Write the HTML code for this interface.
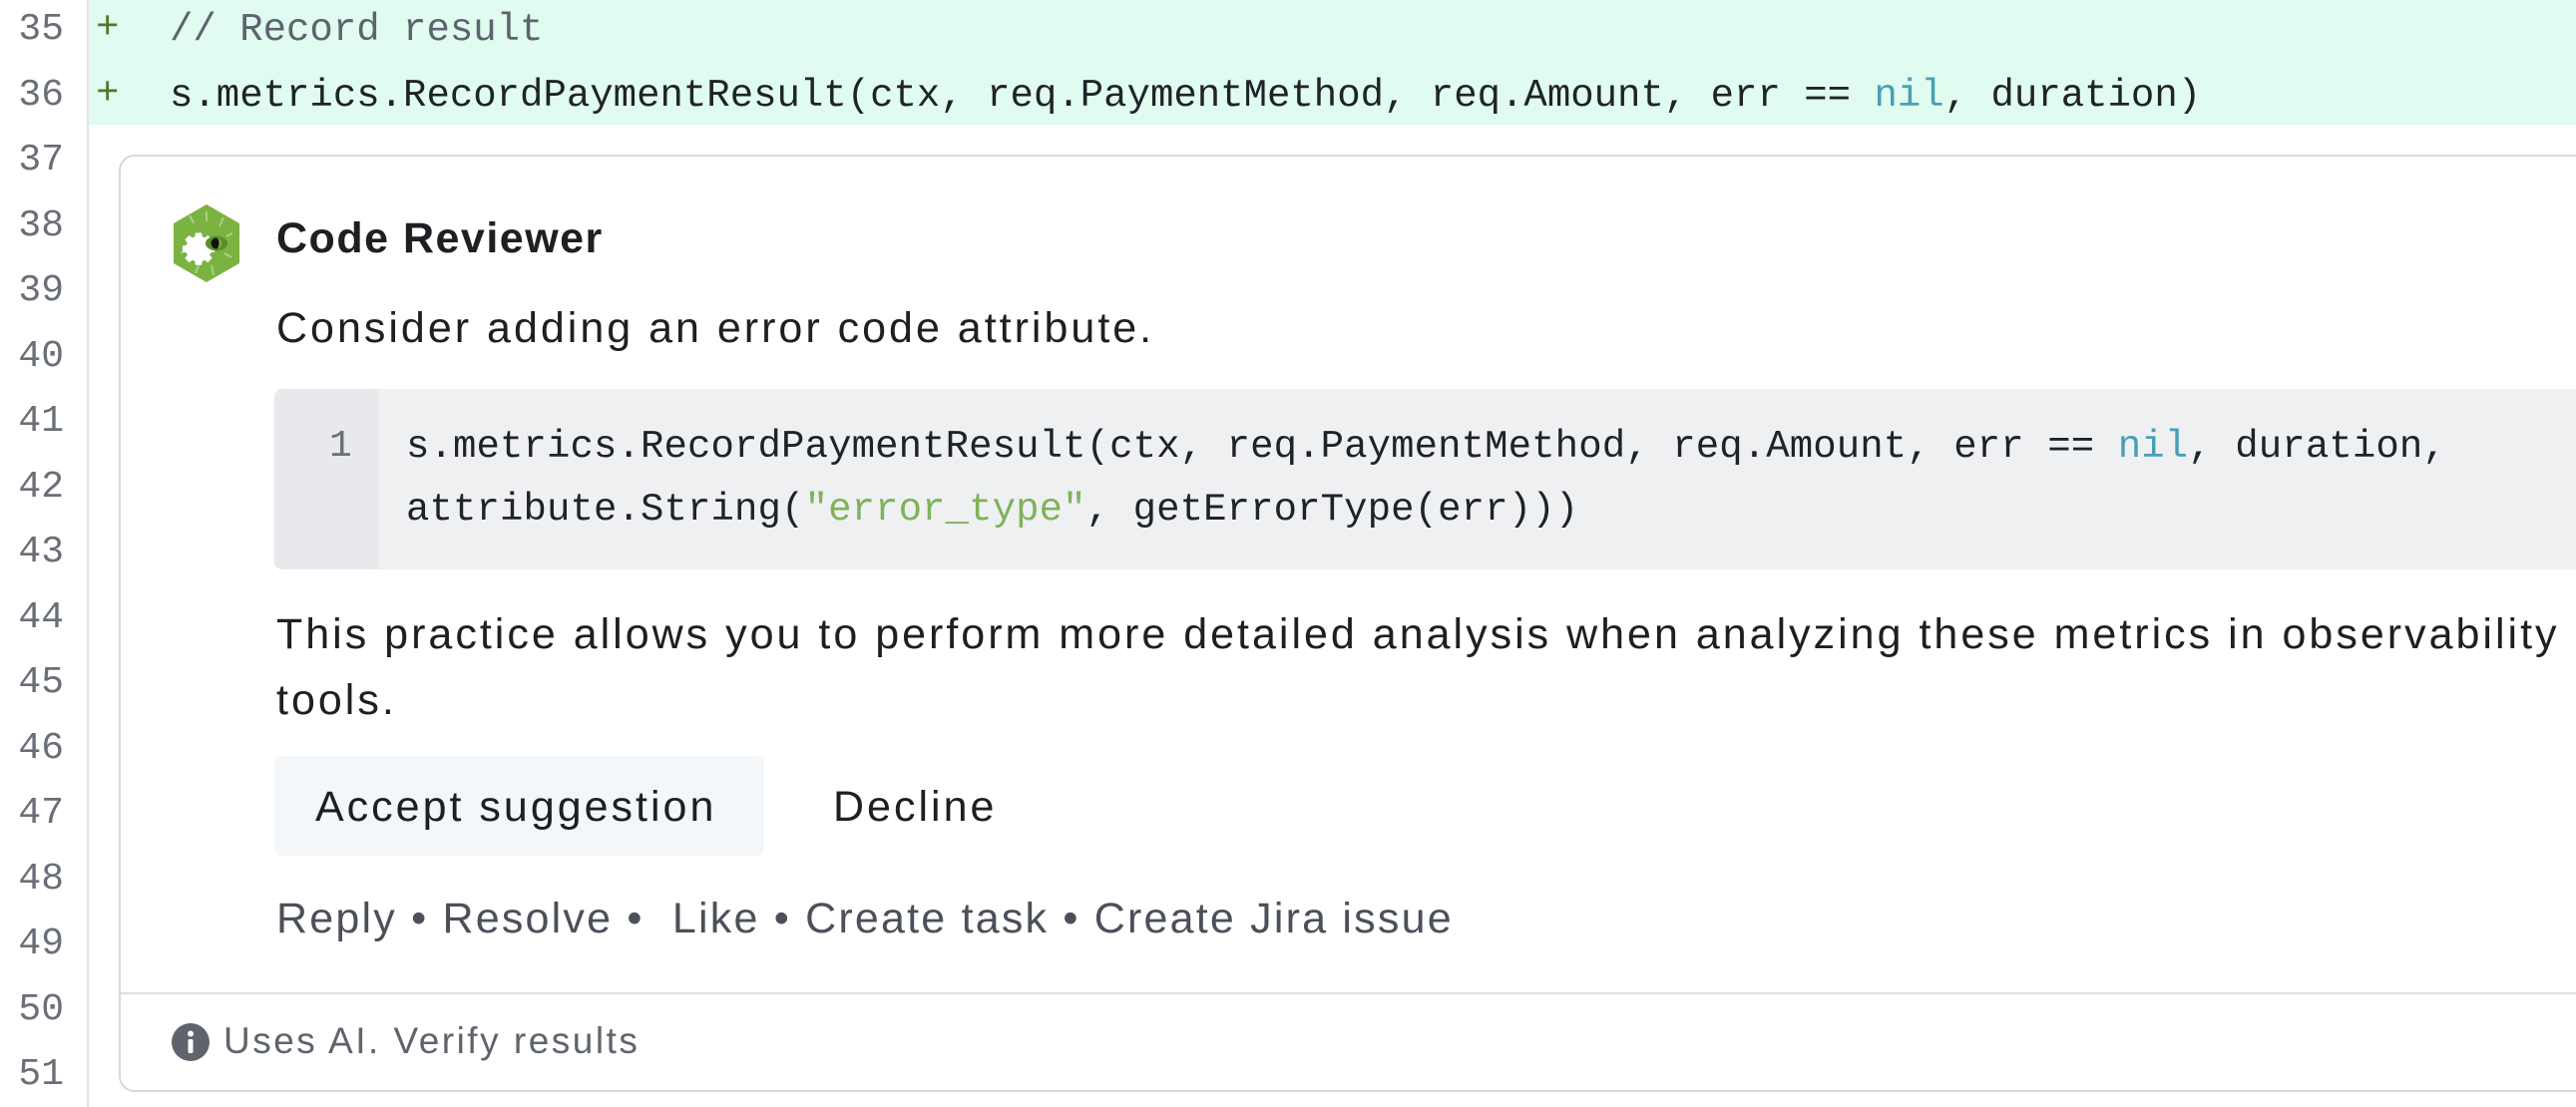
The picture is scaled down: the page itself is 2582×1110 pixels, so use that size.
<!DOCTYPE html>
<html><head><meta charset="utf-8"><style>
*{margin:0;padding:0;box-sizing:border-box}
body{width:2582px;height:1110px;overflow:hidden;background:#fff;position:relative;font-family:"Liberation Sans",sans-serif;color:#1d1f22}
.ab{position:absolute;white-space:pre}
.t{font-size:43px;letter-spacing:3px;line-height:48px}
.ln{position:absolute;left:0;width:64px;text-align:right;font-family:"Liberation Mono",monospace;font-size:38px;color:#6a6f77;line-height:40px}
.mono{font-family:"Liberation Mono",monospace}
</style></head><body>
<div class="ab" style="left:89px;top:0;width:2493px;height:125px;background:#e0fbf0"></div>
<div class="ab" style="left:87px;top:0;width:2px;height:1110px;background:#e3e5e8"></div>
<div class="ln" style="top:10px">35</div>
<div class="ln" style="top:76px">36</div>
<div class="ln" style="top:141px">37</div>
<div class="ln" style="top:207px">38</div>
<div class="ln" style="top:272px">39</div>
<div class="ln" style="top:338px">40</div>
<div class="ln" style="top:403px">41</div>
<div class="ln" style="top:469px">42</div>
<div class="ln" style="top:534px">43</div>
<div class="ln" style="top:600px">44</div>
<div class="ln" style="top:665px">45</div>
<div class="ln" style="top:731px">46</div>
<div class="ln" style="top:796px">47</div>
<div class="ln" style="top:862px">48</div>
<div class="ln" style="top:927px">49</div>
<div class="ln" style="top:993px">50</div>
<div class="ln" style="top:1058px">51</div>
<div class="ab mono" style="left:96px;top:8px;font-size:39px;line-height:40px;color:#4d7a2a">+</div>
<div class="ab mono" style="left:96px;top:74px;font-size:39px;line-height:40px;color:#4d7a2a">+</div>
<div class="ab mono" style="left:170px;top:10px;font-size:39px;line-height:40px;color:#5c636e">// Record result</div>
<div class="ab mono" style="left:170px;top:76px;font-size:39px;line-height:40px;color:#1f2328">s.metrics.RecordPaymentResult(ctx, req.PaymentMethod, req.Amount, err == <span style="color:#4a9fb5">nil</span>, duration)</div>

<div class="ab" style="left:119px;top:155px;width:2500px;height:940px;border:2px solid #d6d9dd;border-radius:16px;background:#fff"></div>
<svg class="ab" style="left:172px;top:204px" width="70" height="80" viewBox="0 0 70 80">
<polygon points="35,1 68,20 68,60 35,79 2,60 2,20" fill="#7bb342"/>
<g stroke="#b5d98a" stroke-width="2" opacity=".8"><line x1="35" y1="8" x2="35" y2="18"/><line x1="52" y1="14" x2="48" y2="23"/><line x1="61" y1="30" x2="55" y2="33"/><line x1="60" y1="54" x2="53" y2="50"/><line x1="42" y1="72" x2="40" y2="62"/><line x1="24" y1="70" x2="27" y2="62"/><line x1="9" y1="50" x2="15" y2="47"/><line x1="18" y1="12" x2="22" y2="20"/></g>
<path transform="translate(27 40) scale(0.62) translate(-27 -40)" d="M22 23h10l1 6 4 2 5-4 7 7-4 5 2 4 6 1v10l-6 1-2 4 4 5-7 7-5-4-4 2-1 6h-10l-1-6-4-2-5 4-7-7 4-5-2-4-6-1v-10l6-1 2-4-4-5 7-7 5 4 4-2z" fill="#fff"/>
<ellipse cx="45" cy="40" rx="11" ry="7.5" fill="#5a8f2c"/>
<circle cx="45" cy="40" r="5.5" fill="#111"/>
<path d="M45 34.5a5.5 5.5 0 0 1 0 11a2.5 5.5 0 0 0 0-11z" fill="#7bb342"/>
</svg>
<div class="ab" style="left:277px;top:215px;font-size:43px;font-weight:bold;letter-spacing:1.5px;line-height:48px">Code Reviewer</div>
<div class="ab t" style="left:277px;top:305px">Consider adding an error code attribute.</div>

<div class="ab" style="left:275px;top:390px;width:2400px;height:181px;background:#eff0f2;border-radius:8px"></div>
<div class="ab" style="left:275px;top:390px;width:104px;height:181px;background:#e8e9ec;border-radius:8px 0 0 8px"></div>
<div class="ab mono" style="left:330px;top:428px;font-size:38px;line-height:40px;color:#6a6f77">1</div>
<div class="ab mono" style="left:407px;top:417px;font-size:39px;letter-spacing:0.1px;line-height:63px;color:#1f2328">s.metrics.RecordPaymentResult(ctx, req.PaymentMethod, req.Amount, err == <span style="color:#4a9fb5">nil</span>, duration,
attribute.String(<span style="color:#7fb25a">"error_type"</span>, getErrorType(err)))</div>

<div class="ab t" style="left:277px;top:603px;line-height:66px">This practice allows you to perform more detailed analysis when analyzing these metrics in observability
tools.</div>

<div class="ab" style="left:275px;top:758px;width:491px;height:100px;background:#f4f7fa;border-radius:8px"></div>
<div class="ab t" style="left:316px;top:785px">Accept suggestion</div>
<div class="ab t" style="left:835px;top:785px">Decline</div>
<div class="ab t" style="left:277px;top:897px;color:#4b5059;letter-spacing:2.2px">Reply • Resolve •  Like • Create task • Create Jira issue</div>

<div class="ab" style="left:121px;top:995px;width:2461px;height:2px;background:#dcdfe3"></div>
<svg class="ab" style="left:172px;top:1026px" width="38" height="38" viewBox="0 0 38 38"><circle cx="19" cy="19" r="19" fill="#5f646c"/><circle cx="19" cy="10.5" r="3" fill="#fff"/><rect x="16.5" y="16" width="5" height="14" rx="1.5" fill="#fff"/></svg>
<div class="ab" style="left:224px;top:1024px;font-size:37px;letter-spacing:2.5px;line-height:40px;color:#5f646c">Uses AI. Verify results</div>
</body></html>
